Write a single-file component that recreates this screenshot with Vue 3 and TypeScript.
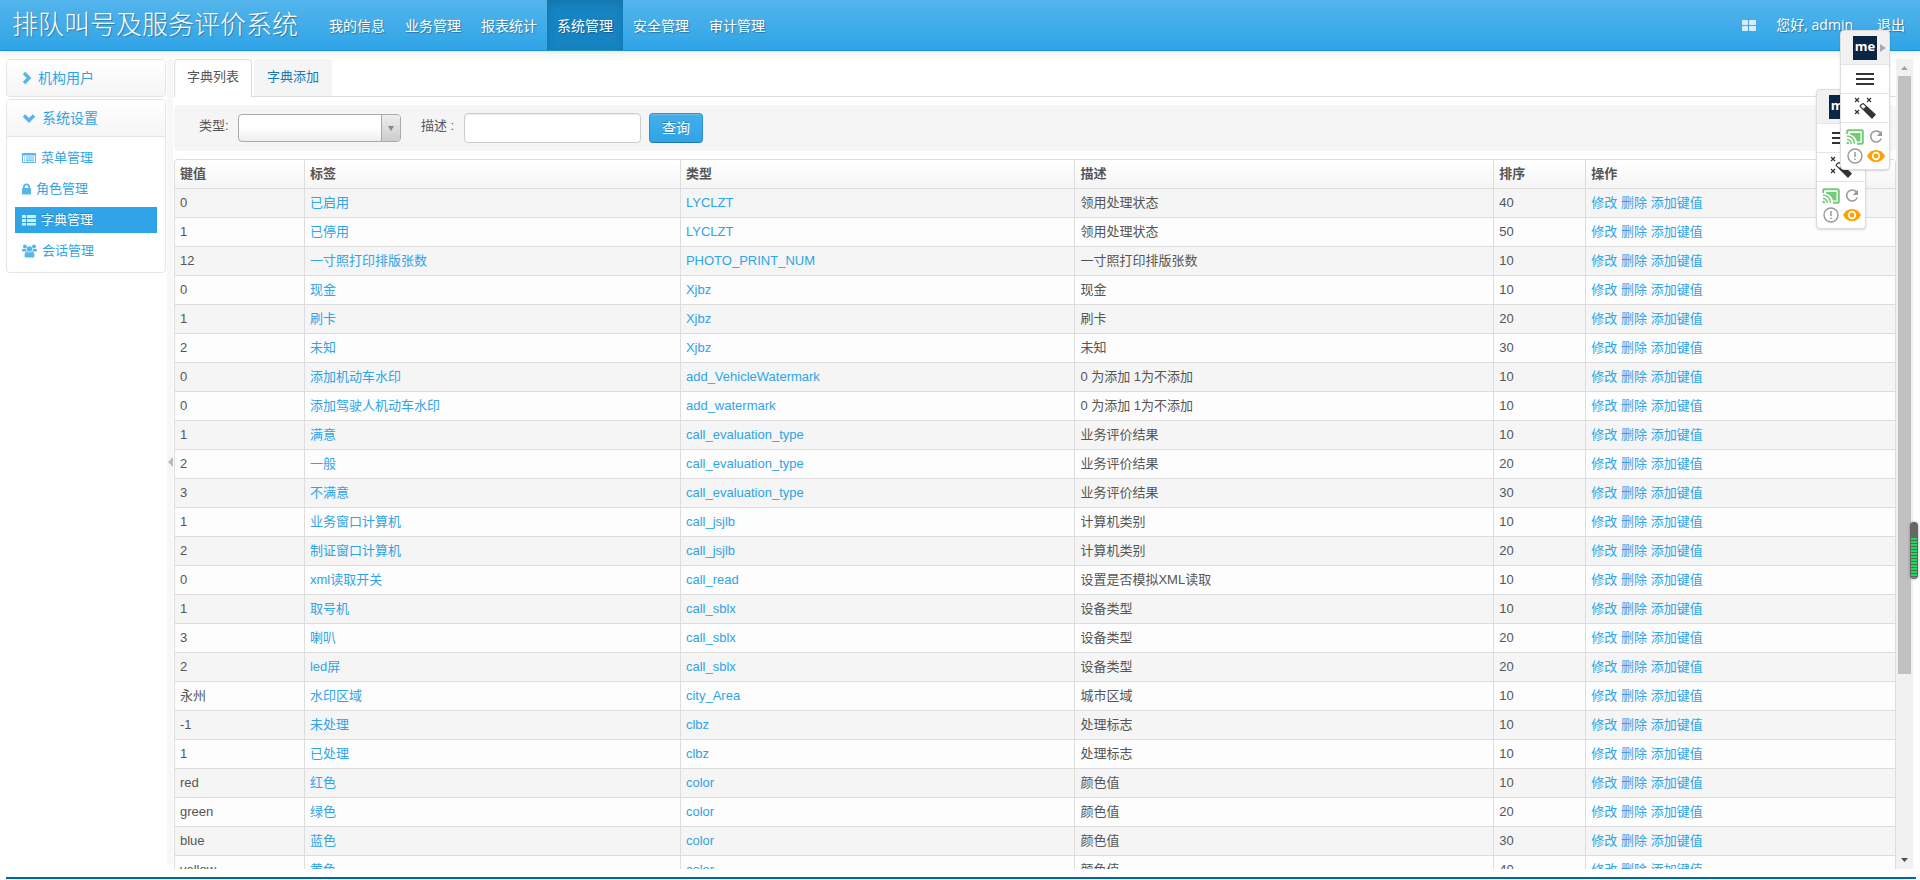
<script setup lang="ts">
import { ref } from 'vue'

interface DictRow {
  value: string
  label: string
  type: string
  desc: string
  sort: number
}

const navItems: string[] = ['我的信息', '业务管理', '报表统计', '系统管理', '安全管理', '审计管理']
const activeNav = ref('系统管理')

const menuItems = [
  { icon: 'list', text: '菜单管理' },
  { icon: 'lock', text: '角色管理' },
  { icon: 'grid', text: '字典管理' },
  { icon: 'group', text: '会话管理' },
]
const activeMenu = ref('字典管理')

const dictType = ref('')
const description = ref('')
const actions: string[] = ['修改', '删除', '添加键值']

const row = (value: string, label: string, type: string, desc: string, sort: number): DictRow => ({
  value,
  label,
  type,
  desc,
  sort,
})

const rows: DictRow[] = [
  row('0', '已启用', 'LYCLZT', '领用处理状态', 40),
  row('1', '已停用', 'LYCLZT', '领用处理状态', 50),
  row('12', '一寸照打印排版张数', 'PHOTO_PRINT_NUM', '一寸照打印排版张数', 10),
  row('0', '现金', 'Xjbz', '现金', 10),
  row('1', '刷卡', 'Xjbz', '刷卡', 20),
  row('2', '未知', 'Xjbz', '未知', 30),
  row('0', '添加机动车水印', 'add_VehicleWatermark', '0 为添加 1为不添加', 10),
  row('0', '添加驾驶人机动车水印', 'add_watermark', '0 为添加 1为不添加', 10),
  row('1', '满意', 'call_evaluation_type', '业务评价结果', 10),
  row('2', '一般', 'call_evaluation_type', '业务评价结果', 20),
  row('3', '不满意', 'call_evaluation_type', '业务评价结果', 30),
  row('1', '业务窗口计算机', 'call_jsjlb', '计算机类别', 10),
  row('2', '制证窗口计算机', 'call_jsjlb', '计算机类别', 20),
  row('0', 'xml读取开关', 'call_read', '设置是否模拟XML读取', 10),
  row('1', '取号机', 'call_sblx', '设备类型', 10),
  row('3', '喇叭', 'call_sblx', '设备类型', 20),
  row('2', 'led屏', 'call_sblx', '设备类型', 20),
  row('永州', '水印区域', 'city_Area', '城市区域', 10),
  row('-1', '未处理', 'clbz', '处理标志', 10),
  row('1', '已处理', 'clbz', '处理标志', 10),
  row('red', '红色', 'color', '颜色值', 10),
  row('green', '绿色', 'color', '颜色值', 20),
  row('blue', '蓝色', 'color', '颜色值', 30),
  row('yellow', '黄色', 'color', '颜色值', 40),
]

const floaters: string[] = ['floater-back', 'floater-front']
</script>

<template>
  <div class="shell">
    <header class="topbar">
      <a class="brand" href="#">排队叫号及服务评价系统</a>
      <nav class="nav">
        <a
          v-for="item in navItems"
          :key="item"
          href="#"
          :class="{ active: item === activeNav }"
          @click.prevent="activeNav = item"
        >{{ item }}</a>
      </nav>
      <div class="user">
        <a href="#" aria-label="主题">
          <svg width="14" height="11" viewBox="0 0 14 11" fill="#d8eefb">
            <rect width="6" height="5" rx="1" /><rect x="7" width="7" height="5" rx="1" />
            <rect y="6" width="6" height="5" rx="1" /><rect x="7" y="6" width="7" height="5" rx="1" />
          </svg>
        </a>
        <a href="#">您好, admin</a>
        <a class="logout" href="#">退出</a>
      </div>
    </header>

    <div class="body">
      <aside class="sidebar">
        <section class="group">
          <button class="group-head" type="button">
            <svg width="10" height="14" viewBox="0 0 10 14"><path d="M2 2l5 5-5 5" fill="none" stroke="currentColor" stroke-width="3.4" /></svg>
            机构用户
          </button>
        </section>
        <section class="group open">
          <button class="group-head" type="button">
            <svg width="14" height="10" viewBox="0 0 14 10"><path d="M2 2.5l5 5 5-5" fill="none" stroke="currentColor" stroke-width="3.4" /></svg>
            系统设置
          </button>
          <ul class="menu">
            <li v-for="item in menuItems" :key="item.text">
              <a href="#" :class="{ active: item.text === activeMenu }" @click.prevent="activeMenu = item.text">
                <svg v-if="item.icon === 'list'" width="14" height="12" viewBox="0 0 14 12" fill="currentColor">
                  <path fill-rule="evenodd" d="M1 1h12a1 1 0 0 1 1 1v8a1 1 0 0 1-1 1H1a1 1 0 0 1-1-1V2a1 1 0 0 1 1-1zm0 2.5V10h12V3.5z" />
                  <path d="M2 4.5h1v1H2zM4 4.5h8v1H4zM2 6.4h1v1H2zM4 6.4h8v1H4zM2 8.2h1v1H2zM4 8.2h8v1H4z" />
                </svg>
                <svg v-else-if="item.icon === 'lock'" width="9" height="12" viewBox="0 0 9 12" fill="currentColor">
                  <path fill-rule="evenodd" d="M1 5V4a3.5 3.5 0 0 1 7 0v1h.4q.6 0 .6.6v5.2q0 .7-.6.7H.6q-.6 0-.6-.7V5.6Q0 5 .6 5zm1.800 0h3.400V4a1.700 1.700 0 0 0-3.400 0z" />
                </svg>
                <svg v-else-if="item.icon === 'grid'" width="14" height="12" viewBox="0 0 14 12" fill="currentColor">
                  <path d="M0 1h4v3H0zM5 1h9v3H5zM0 5h4v3H0zM5 5h9v3H5zM0 9h4v2.500H0zM5 9h9v2.500H5z" />
                </svg>
                <svg v-else width="15" height="14" viewBox="0 0 15 14" fill="currentColor">
                  <circle cx="3" cy="2.500" r="2" /><circle cx="12" cy="2.500" r="2" /><circle cx="7.500" cy="5" r="2.800" />
                  <path d="M0 7V5.500Q.5 4.500 2 5h2q0 1.500 1 2.500H1Q0 7.500 0 7zM15 7V5.500Q14.500 4.500 13 5h-2q0 1.500-1 2.500h4q1 0 1-.5zM2.500 12q0-4 2.500-4.500 2.500 1.800 5 0 2.500.5 2.500 4.500 0 1.500-1.500 1.500H4q-1.500 0-1.500-1.500z" />
                </svg>
                {{ item.text }}
              </a>
            </li>
          </ul>
        </section>
      </aside>

      <button class="splitter" type="button" aria-label="收起菜单">
        <svg width="5" height="10" viewBox="0 0 5 10"><path d="M5 0v10L0 5z" fill="#bbb" /></svg>
      </button>

      <main class="content">
        <nav class="tabs">
          <a class="active" href="#">字典列表</a>
          <a href="#">字典添加</a>
        </nav>

        <form class="search" @submit.prevent>
          <label for="dict-type">类型:</label>
          <span class="select-box">
            <select id="dict-type" v-model="dictType"><option value=""></option></select>
            <span class="select-arrow">
              <svg width="6" height="5" viewBox="0 0 6 5"><path d="M0 0h6L3 5z" fill="#888" /></svg>
            </span>
          </span>
          <label class="desc-label" for="dict-desc">描述 :</label>
          <input id="dict-desc" v-model="description" type="text" />
          <button type="submit">查询</button>
        </form>

        <table>
          <colgroup>
            <col class="c-value" /><col class="c-label" /><col class="c-type" />
            <col class="c-desc" /><col class="c-sort" /><col />
          </colgroup>
          <thead>
            <tr><th>键值</th><th>标签</th><th>类型</th><th>描述</th><th>排序</th><th>操作</th></tr>
          </thead>
          <tbody>
            <tr v-for="(r, i) in rows" :key="i">
              <td>{{ r.value }}</td>
              <td><a href="#">{{ r.label }}</a></td>
              <td><a href="#">{{ r.type }}</a></td>
              <td>{{ r.desc }}</td>
              <td>{{ r.sort }}</td>
              <td><template v-for="a in actions" :key="a"><a href="#">{{ a }}</a>{{ ' ' }}</template></td>
            </tr>
          </tbody>
        </table>
      </main>

      <div class="scrollbar">
        <svg width="7" height="4" viewBox="0 0 7 4"><path d="M0 4h7L3.500 0z" fill="#a3a3a3" /></svg>
        <div class="track"><div class="thumb"></div></div>
        <svg width="7" height="4" viewBox="0 0 7 4"><path d="M0 0h7L3.500 4z" fill="#505050" /></svg>
      </div>
    </div>
    <footer class="foot"></footer>

    <div v-for="f in floaters" :key="f" class="floater" :class="f">
      <div class="f-head">
        <span class="me">me</span>
        <svg class="f-arrow" width="6" height="8" viewBox="0 0 6 8"><path d="M0 0v8l6-4z" fill="#aaa" /></svg>
      </div>
      <div class="f-cell">
        <svg width="18" height="12" viewBox="0 0 18 12"><path d="M0 1h18M0 6h18M0 11h18" stroke="#333" stroke-width="2" /></svg>
      </div>
      <div class="f-cell">
        <svg width="22" height="22" viewBox="0 0 22 22">
          <path d="M1 1l4 4M5 1L1 5M13 1l4 4M17 1l-4 4M1 13l4 4M5 13l-4 4" stroke="#333" stroke-width="1.200" />
          <path d="M5.500 9.500Q6 6.500 9.500 6L22 17.500 18 22z" fill="#333" />
          <path d="M6.800 9.300Q7.300 7.500 9.200 7.200L11.800 9.700 9.400 11.800z" fill="#fff" />
        </svg>
      </div>
      <div class="f-icons">
        <svg width="18" height="16" viewBox="0 0 18 16">
          <path d="M1.200 5V2.200q0-1 1-1h13.600q1 0 1 1v11.600q0 1-1 1H11" fill="none" stroke="#73cb76" stroke-width="2" />
          <path d="M4 4h10.500v8.500H11Q9.500 7 4 5.500z" fill="#73cb76" />
          <path d="M1 7q7 .5 7.500 7.800M1 10.500q4 .3 4.200 4.300" fill="none" stroke="#73cb76" stroke-width="1.600" />
          <circle cx="1.800" cy="14" r="1.300" fill="#73cb76" />
        </svg>
        <svg width="14" height="14" viewBox="0 0 14 14">
          <path d="M11.500 3A5.500 5.500 0 1 0 12.300 8.500" fill="none" stroke="#999" stroke-width="1.500" /><path d="M13 .8v5.200H7.800z" fill="#999" />
        </svg>
        <svg width="16" height="16" viewBox="0 0 16 16">
          <circle cx="8" cy="8" r="7" fill="none" stroke="#999" stroke-width="1.400" /><path d="M8 4v5M8 10.500v1.500" stroke="#999" stroke-width="1.500" />
        </svg>
        <svg width="18" height="12" viewBox="0 0 18 12">
          <path d="M0 6Q3 0 9 0t9 6q-3 6-9 6T0 6z" fill="#ffa200" /><circle cx="9" cy="6" r="3.300" fill="#ffa200" stroke="#fff" stroke-width="1.700" />
        </svg>
      </div>
    </div>

    <div class="meter"><div class="meter-fill"></div></div>
  </div>
</template>

<style>
body {
  background: #fff;
}
</style>

<style scoped>
* {
  box-sizing: border-box;
}
.shell {
  position: relative;
  display: flex;
  flex-direction: column;
  height: 100vh;
  overflow: hidden;
  color: #555;
  font: 13px/20px 'Liberation Sans', 'Noto Sans CJK SC', sans-serif;
}
button,
input,
select {
  font: inherit;
  margin: 0;
}
a {
  color: #2fa4e7;
  text-decoration: none;
}
svg {
  display: block;
  flex: none;
}

.topbar {
  display: flex;
  flex: none;
  height: 51px;
  background: linear-gradient(#54b4eb, #2fa4e7);
  border-bottom: 1px solid #1990d5;
  box-shadow: 0 1px 8px rgba(0, 0, 0, 0.12);
  font-size: 14px;
}
.topbar a {
  color: #fff;
  text-shadow: 1px 1px 1px rgba(0, 0, 0, 0.3);
}
.topbar .brand {
  padding: 0 21px 0 12px;
  font-size: 26px;
  font-weight: 300;
  line-height: 50px;
}
.nav {
  display: flex;
}
.nav a {
  padding: 2px 10px 0;
  line-height: 48px;
}
.nav .active {
  background: #1684c2;
  box-shadow: inset 0 3px 8px rgba(0, 0, 0, 0.125);
}
.user {
  display: flex;
  align-items: center;
  gap: 20px;
  margin-left: auto;
  padding-right: 15px;
  font-family: 'Open Sans', 'Noto Sans CJK SC', sans-serif;
}
.user .logout {
  margin-left: 4px;
}

.body {
  position: relative;
  display: flex;
  flex: 1;
  min-height: 0;
  margin: 8px 7px 8px 6px;
  background: #fff;
}
.sidebar {
  width: 160px;
  flex: none;
}
.group {
  margin-bottom: 2px;
  border: 1px solid #e5e5e5;
  border-radius: 4px;
  overflow: hidden;
}
.group-head {
  display: flex;
  align-items: center;
  gap: 6px;
  width: 100%;
  height: 36px;
  padding: 0 15px;
  border: 0;
  background: linear-gradient(#fff, #f5f5f5);
  color: #2fa4e7;
  font-size: 14px;
}
.open .group-head {
  height: 37px;
  border-bottom: 1px solid #e5e5e5;
}
.menu {
  display: flex;
  flex-direction: column;
  gap: 5px;
  margin: 0;
  padding: 8px;
  list-style: none;
}
.menu a {
  display: flex;
  align-items: center;
  gap: 5px;
  height: 26px;
  padding: 0 7px;
}
.menu svg,
.group-head svg {
  opacity: 0.8;
}
.menu .active {
  background: #2fa4e7;
  color: #fff;
  text-shadow: 0 -1px 0 rgba(0, 0, 0, 0.2);
}
.splitter {
  display: flex;
  align-items: center;
  justify-content: flex-end;
  width: 6px;
  flex: none;
  margin: 0 1px 5px;
  padding: 0;
  border: 0;
  background: #f7f7f7;
}
.content {
  flex: 1;
  min-width: 0;
  overflow: hidden;
}
.tabs {
  display: flex;
  gap: 2px;
  height: 38px;
  border-bottom: 1px solid #ddd;
}
.tabs a {
  height: 37px;
  padding: 8px 13px;
  border-radius: 4px 4px 0 0;
  background: #f5f5f5;
  color: #157ab5;
}
.tabs .active {
  height: 38px;
  padding: 7px 12px;
  border: 1px solid #ddd;
  border-bottom: 0;
  background: #fff;
  color: #555;
}

.search {
  display: flex;
  align-items: center;
  height: 46px;
  margin: 8px 0;
  padding-left: 25px;
  border-radius: 4px;
  background: #f5f5f5;
}
.search label {
  width: 39px;
  padding-bottom: 4px;
}
.search .desc-label {
  width: 43px;
  margin-left: 20px;
}
.select-box {
  position: relative;
  display: flex;
  width: 163px;
  height: 28px;
}
.select-box select {
  width: 100%;
  padding: 0 24px 0 8px;
  appearance: none;
  border: 1px solid #aaa;
  border-radius: 4px;
  background: linear-gradient(#fff 50%, #eee);
  color: #444;
}
.select-arrow {
  position: absolute;
  top: 1px;
  right: 1px;
  bottom: 1px;
  display: flex;
  align-items: center;
  justify-content: center;
  width: 19px;
  border-left: 1px solid #aaa;
  border-radius: 0 3px 3px 0;
  background: linear-gradient(#eee, #ccc);
  pointer-events: none;
}
.search input {
  width: 177px;
  height: 30px;
  padding: 4px 6px;
  border: 1px solid #ccc;
  border-radius: 4px;
  background: #fff;
  box-shadow: inset 0 1px 1px rgba(0, 0, 0, 0.075);
}
.search button {
  height: 30px;
  margin-left: 8px;
  padding: 0 12px;
  border: 1px solid #2a93d0;
  border-bottom-color: #1a79b0;
  border-radius: 4px;
  background: linear-gradient(#46aeea, #2fa4e7);
  box-shadow: inset 0 1px 0 rgba(255, 255, 255, 0.2);
  color: #fff;
  font-size: 14px;
  text-shadow: 0 -1px 0 rgba(0, 0, 0, 0.25);
}

table {
  width: 100%;
  table-layout: fixed;
  border: 1px solid #ddd;
  border-left: 0;
  border-collapse: separate;
  border-spacing: 0;
  border-radius: 4px;
}
.c-value {
  width: 7.55%;
}
.c-label {
  width: 21.85%;
}
.c-type {
  width: 22.92%;
}
.c-desc {
  width: 24.34%;
}
.c-sort {
  width: 5.35%;
}
th,
td {
  height: 29px;
  padding: 4px 5px;
  border-left: 1px solid #ddd;
  text-align: left;
  line-height: 20px;
  white-space: nowrap;
}
th {
  height: 28px;
  background: linear-gradient(#fff, #f5f5f5);
  font-weight: 700;
}
th:first-child {
  border-top-left-radius: 4px;
}
td {
  border-top: 1px solid #ddd;
  background: #fdfdfd;
}
tbody tr:nth-child(odd) td {
  background: #f5f5f5;
}

.scrollbar {
  display: flex;
  flex-direction: column;
  align-items: center;
  width: 17px;
  flex: none;
  padding: 7px 0;
  background: #f1f1f1;
}
.track {
  flex: 1;
  width: 13px;
  margin: 6px 0;
}
.thumb {
  height: 77%;
  background: #c1c1c1;
}
.foot {
  height: 2px;
  flex: none;
  margin: 0 4px 1px 6px;
  background: #0663a2;
}

/* Floating tool palettes lie over the page and overlap each other. */
.floater {
  position: absolute;
  width: 50px;
  border: 1px solid #ddd;
  border-radius: 4px;
  background: #fff;
  box-shadow: 0 1px 2px rgba(0, 0, 0, 0.15);
  overflow: hidden;
}
.floater-back {
  top: 89px;
  right: 54px;
}
.floater-front {
  top: 30px;
  right: 30px;
}
.f-head,
.f-cell {
  display: flex;
  align-items: center;
  justify-content: center;
  height: 29px;
  border-bottom: 1px solid #e5e5e5;
}
.f-head {
  position: relative;
  height: 34px;
  background: #f1f1f1;
}
.me {
  width: 24px;
  height: 24px;
  background: #0b2545;
  color: #fff;
  font: 700 13px/20px 'Open Sans', sans-serif;
  text-align: center;
}
.f-arrow {
  position: absolute;
  right: 3px;
}
.f-icons {
  display: grid;
  grid-template-columns: 21px 21px;
  grid-auto-rows: 19px;
  place-content: center;
  place-items: center;
  height: 46px;
}

.meter {
  position: absolute;
  top: 522px;
  right: 2px;
  width: 8px;
  height: 57px;
  padding: 16px 1px 1px;
  border-radius: 4px;
  background: #666;
  box-shadow: 0 0 3px rgba(0, 0, 0, 0.35);
}
.meter-fill {
  height: 100%;
  border-radius: 0 0 3px 3px;
  background: repeating-linear-gradient(#20d860 0 2px, #4b6b52 2px 3px);
}
</style>
